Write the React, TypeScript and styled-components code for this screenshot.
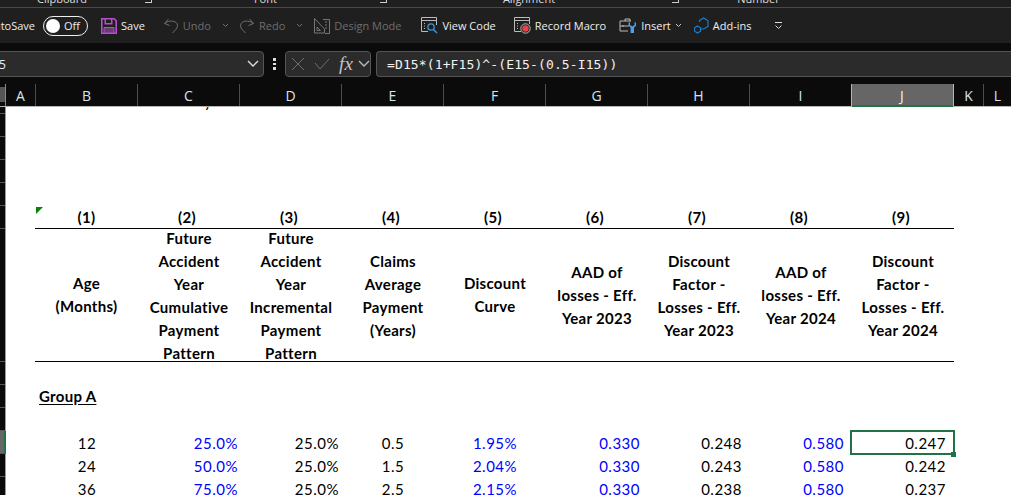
import React from "react";
import styled, { createGlobalStyle } from "styled-components";

const Global = createGlobalStyle`
  html, body { margin: 0; padding: 0; width: 1011px; height: 495px; overflow: hidden; background: #fff; }
  #root { width: 1011px; height: 495px; overflow: hidden; }
  * { box-sizing: border-box; }
`;

const uiFont = `"Open Sans", "Noto Sans", sans-serif`;
const COLS = "30px repeat(9, 102px) 30px 28px";

const Page = styled.div`
  display: flex; flex-direction: column; width: 1011px; height: 495px; overflow: hidden;
  font-family: ${uiFont};
`;

const GroupStrip = styled.div`
  height: 8px; flex: none; background: #1f1f1f; border-bottom: 1px solid #4a4a4a;
  display: flex; align-items: flex-end; overflow: hidden; color: #dcdcdc; font-size: 11px;
`;
const GroupLabel = styled.span<{ $left: number }>`
  margin-left: ${p => p.$left}px; line-height: 14px; margin-bottom: 1px; white-space: nowrap; flex: none;
`;
const Launcher = styled.i<{ $left: number }>`
  margin-left: ${p => p.$left}px; width: 7px; height: 3px; margin-bottom: 4px; flex: none;
  border-right: 1px solid #ccc; border-bottom: 1px solid #ccc;
`;

const Toolbar = styled.div`
  height: 35px; flex: none; background: #1f1f1f; display: flex; align-items: center;
  font-size: 11px; color: #eee; overflow: hidden;
`;
const AutoLabel = styled.span`
  margin-left: -15px; width: 50px; flex: none; text-align: right; white-space: nowrap; font-weight: 500;
`;
const Toggle = styled.div`
  margin-left: 8px; width: 45px; height: 20px; flex: none; border: 1.5px solid #eee; border-radius: 10px;
  display: flex; align-items: center; padding-left: 2px; gap: 4px; color: #eee;
`;
const Knob = styled.span`
  width: 14px; height: 14px; border-radius: 50%; background: #fff; flex: none;
`;
const Item = styled.div<{ $left: number; $off?: boolean }>`
  margin-left: ${p => p.$left}px; display: flex; align-items: center; gap: 4px; flex: none; white-space: nowrap;
  color: ${p => (p.$off ? "#6e6e6e" : "#eee")};
  svg { display: block; flex: none; }
`;

const FormulaRow = styled.div`
  height: 41px; flex: none; background: #0b0b0b; display: flex; align-items: flex-start; padding-top: 8px; overflow: hidden;
`;
const Box = styled.div`
  height: 26px; background: #2b2b2b; border: 1px solid #555; border-radius: 4px; display: flex; align-items: center; flex: none;
`;
const NameBox = styled(Box)`
  margin-left: -20px; width: 284px; padding: 0 3px 0 8px; justify-content: space-between;
  color: #eee; font-size: 12px;
`;
const Dots = styled.div`
  width: 21px; flex: none; height: 26px; display: flex; flex-direction: column; align-items: center; justify-content: center; gap: 2px;
  i { width: 2.4px; height: 2.4px; background: #ddd; display: block; }
`;
const FxBox = styled(Box)`
  width: 86px; padding-left: 5px; gap: 0;
  svg { display: block; flex: none; }
`;
const FxGlyph = styled.span`
  font-family: "Liberation Serif", serif; font-style: italic; font-weight: 400; font-size: 19px; line-height: 20px; color: #c4c4c4;
  margin-left: 9px; width: 18px; flex: none; letter-spacing: 0.3px;
`;
const Input = styled(Box)`
  margin-left: 5px; width: 660px; padding-left: 10px; border-radius: 4px 0 0 4px; border-right: none;
  font-family: "DejaVu Sans Mono", "Liberation Mono", monospace; font-size: 13px; letter-spacing: 0.12px; color: #f2f2f2; white-space: nowrap;
`;

const ColHeaderRow = styled.div`
  height: 23px; flex: none; display: flex; background: #0b0b0b; border-bottom: 1px solid #b5b5b5;
`;
const Corner = styled.div`
  width: 6px; flex: none; border-right: 1px solid #8a8a8a; background: linear-gradient(#0b0b0b 0 3px, #555 3px 18px, #0b0b0b 18px);
`;
const ColHeaders = styled.div`
  display: grid; grid-template-columns: ${COLS}; flex: none;
`;
const ColHead = styled.div<{ $active?: boolean; $last?: boolean }>`
  font-size: 14px; display: flex; align-items: center; justify-content: center; color: #d8e4f0;
  border-right: 1px solid ${p => (p.$active ? "#b5b5b5" : p.$last ? "transparent" : "#4d4d4d")};
  ${p => p.$active && `background:#666; color:#f2f2f2; box-shadow: inset 1px 0 #b5b5b5, inset 0 -2px #217346; margin-bottom:-1px; margin-left:-1px;`}
`;

const Sheet = styled.div`
  flex: 1; display: flex; min-height: 0; overflow: hidden;
`;
const Gutter = styled.div`
  width: 6px; flex: none; display: flex; flex-direction: column; background: #0b0b0b; border-right: 1px solid #9a9a9a;
`;
const GutterRow = styled.div<{ $h: number; $active?: boolean }>`
  height: ${p => p.$h}px; flex: none; border-bottom: 1px solid #555;
  ${p => p.$active && `background:#666; border-right:2px solid #217346; margin-right:-1px;`}
`;
const Grid = styled.div`
  flex: none; display: flex; flex-direction: column; background: #fff; color: #000;
  font-family: Lato, "Liberation Sans", sans-serif; font-size: 15px; letter-spacing: 0.3px;
`;
const Row = styled.div<{ $h: number }>`
  display: grid; grid-template-columns: ${COLS}; height: ${p => p.$h}px; flex: none;
`;
const Cell = styled.div<{ $align?: string; $blue?: boolean; $pad?: number }>`
  position: relative; display: flex; align-items: flex-end; padding: 0 ${p => p.$pad ?? 0}px 0 0;
  justify-content: ${p => p.$align ?? "center"};
  color: ${p => (p.$blue ? "#0000ff" : "#000")};
  white-space: nowrap; line-height: 21px; letter-spacing: 0.5px;
`;
const HeadCell = styled.div`
  position: relative; display: flex; align-items: flex-end; justify-content: center; padding-right: 4px;
  font-weight: 700; line-height: 21px; border-bottom: 1px solid #000;
  &:nth-child(2) { margin-left: -1px; padding-right: 0; }
`;
const WrapCell = styled.div<{ $top: number }>`
  display: flex; align-items: center; justify-content: center; text-align: center; padding-top: ${p => p.$top}px;
  font-weight: 700; line-height: 23px; border-bottom: 1px solid #000; white-space: pre-line; overflow: hidden;
  &:nth-child(2) { margin-left: -1px; }
`;
const Tail = styled.div`
  display: flex; justify-content: flex-start; align-items: flex-end; padding: 0 0 3px 66px; overflow: hidden; line-height: 20px;
`;
const Marker = styled.span`
  position: absolute; left: 1px; top: 1px; width: 0; height: 0;
  border-top: 7px solid #0a800a; border-right: 7px solid transparent;
`;
const GroupCell = styled.div`
  display: flex; align-items: flex-end; padding: 0 0 1px 3px; line-height: 21px; white-space: nowrap;
`;
const GroupTitle = styled.span`
  font-weight: 700; text-decoration: underline; text-underline-offset: 2px;
`;
const Selection = styled.span`
  position: absolute; inset: -1px -1px -1px -2px; border: 2px solid #217346; pointer-events: none;
  &::after {
    content: ""; position: absolute; right: -3px; bottom: -4px; width: 5px; height: 5px;
    background: #217346;
  }
`;

const Chevron = ({ c = "#ccc", w = 7 }: { c?: string; w?: number }) => (
  <svg width={w} height={(w * 5) / 7} viewBox="0 0 7 5"><path d="M1 1l2.500 2.500L6 1" fill="none" stroke={c} strokeWidth={w > 8 ? 0.7 : 1} /></svg>
);
const SaveIcon = () => (
  <svg width="16" height="16" viewBox="0 0 16 16">
    <path d="M.8.8h12.400l2 2v12.400H.8z" fill="#1f1f1f" stroke="#b54fca" strokeWidth="1.600" />
    <path d="M3.500 1h8v5.500h-8z" fill="#b54fca" />
    <path d="M5 1.500h5v3.500H5z" fill="#1f1f1f" />
    <path d="M3 9.500h10V15H3z" fill="#6a3c75" stroke="#b54fca" />
  </svg>
);
const UndoIcon = ({ flip }: { flip?: boolean }) => (
  <svg width="16" height="16" viewBox="0 0 16 16" style={flip ? { transform: "scaleX(-1)" } : undefined}>
    <path d="M5.500 1L1.500 5.500l5 2M1.500 5.500C6 2 14 2 14.500 7.500c.2 3-3 5-5 7.500" fill="none" stroke="#707070" strokeWidth="1" />
  </svg>
);
const DesignIcon = () => (
  <svg width="16" height="16" viewBox="0 0 16 16" fill="none" stroke="#767676">
    <path d="M.5.5l10 10.500v4H.5zM3 9l3.500 3.500H3z" />
    <path d="M9 1.500h6.500v14H11M11 4h2M11 7h2M11 10h2" />
  </svg>
);
const CodeIcon = () => (
  <svg width="17" height="17" viewBox="0 0 17 17" fill="none">
    <path d="M7 14.500H.5V.5h15V8M.5 3.500h15" stroke="#bbb" />
    <path d="M3 6.500h1M3 9h1M3 11.500h1" stroke="#bbb" />
    <circle cx="10" cy="10" r="3.200" stroke="#3a96dd" strokeWidth="1.300" />
    <path d="M12.500 12.500l3.500 3.500" stroke="#3a96dd" strokeWidth="1.500" />
  </svg>
);
const RecordIcon = () => (
  <svg width="17" height="17" viewBox="0 0 17 17" fill="none">
    <path d="M7 14.500H.5V.5h15V7M.5 3.500h15" stroke="#bbb" />
    <path d="M3 6.500h1M3 9h1M3 11.500h1" stroke="#bbb" />
    <circle cx="11.500" cy="11.500" r="4.700" stroke="#bbb" />
    <circle cx="11.500" cy="11.500" r="3.200" fill="#e8404a" />
  </svg>
);
const InsertIcon = () => (
  <svg width="18" height="16" viewBox="0 0 18 16" fill="none">
    <path d="M6 3V1h5v2M9 13H1V3h11M1 8h9M4 7v2" stroke="#bbb" />
    <path d="M11 4v3l2.300 1.500L15.600 7V4l1.400.800v3l-2 1.700V15h-3.400V9.500l-2-1.700v-3z" fill="#4aa3e8" />
  </svg>
);
const AddInsIcon = () => (
  <svg width="15" height="17" viewBox="0 0 15 17" fill="none" stroke="#1f7fd0" strokeWidth="1.100">
    <path d="M5.500 5V3.500L9.500 1l4.500 2.500v6L9.500 12H7" />
    <path d="M3.500 9L6.500 10.700v3.600L3.500 16 .6 14.300v-3.600z" />
  </svg>
);
const CustomizeIcon = () => (
  <svg width="9" height="9" viewBox="0 0 9 9" fill="none" stroke="#ddd">
    <path d="M1 1.500h7M1.500 4.500L4.500 7.500l3-3" />
  </svg>
);

const heads = ["A","B","C","D","E","F","G","H","I","J","K","L"];
const nums = ["(1)","(2)","(3)","(4)","(5)","(6)","(7)","(8)","(9)"];
const titles = [
  "Age\n(Months)",
  "Future\nAccident\nYear\nCumulative\nPayment\nPattern",
  "Future\nAccident\nYear\nIncremental\nPayment\nPattern",
  "Claims\nAverage\nPayment\n(Years)",
  "Discount\nCurve",
  "AAD of\nlosses - Eff.\nYear 2023",
  "Discount\nFactor -\nLosses - Eff.\nYear 2023",
  "AAD of\nlosses - Eff.\nYear 2024",
  "Discount\nFactor -\nLosses - Eff.\nYear 2024",
];
const data = [
  ["12","25.0%","25.0%","0.5","1.95%","0.330","0.248","0.580","0.247"],
  ["24","50.0%","25.0%","1.5","2.04%","0.330","0.243","0.580","0.242"],
  ["36","75.0%","25.0%","2.5","2.15%","0.330","0.238","0.580","0.237"],
];
const blue = [false,true,false,false,true,true,false,true,false];
const aligns = ["center","flex-end","flex-end","center","center","flex-end","flex-end","flex-end","flex-end"];
const pads = [0,2,3,0,0,8,8,8,8];
const gutter = [7,23,23,23,23,23,133,23,23,23,23,23,23];
const Empty = () => <div />;
const EmptyRow = ({ h }: { h: number }) => <Row $h={h} />;

export default function App() {
  return (
    <Page>
      <Global />
      <GroupStrip>
        <GroupLabel $left={37}>Clipboard</GroupLabel>
        <Launcher $left={58} />
        <GroupLabel $left={102}>Font</GroupLabel>
        <Launcher $left={103} />
        <GroupLabel $left={116}>Alignment</GroupLabel>
        <Launcher $left={117} />
        <GroupLabel $left={58}>Number</GroupLabel>
      </GroupStrip>
      <Toolbar>
        <AutoLabel>AutoSave</AutoLabel>
        <Toggle><Knob /><span>Off</span></Toggle>
        <Item $left={13}><SaveIcon /><span>Save</span></Item>
        <Item $left={18} $off><UndoIcon /><span>Undo</span></Item>
        <Item $left={11}><Chevron c="#707070" /></Item>
        <Item $left={10} $off><UndoIcon flip /><span>Redo</span></Item>
        <Item $left={11}><Chevron c="#707070" /></Item>
        <Item $left={11} $off><DesignIcon /><span>Design Mode</span></Item>
        <Item $left={20}><CodeIcon /><span>View Code</span></Item>
        <Item $left={18}><RecordIcon /><span>Record Macro</span></Item>
        <Item $left={13}><InsertIcon /><span>Insert</span><Chevron /></Item>
        <Item $left={12}><AddInsIcon /><span>Add-ins</span></Item>
        <Item $left={22}><CustomizeIcon /></Item>
      </Toolbar>
      <FormulaRow>
        <NameBox><span>J15</span><Chevron c="#ddd" w={14} /></NameBox>
        <Dots><i /><i /><i /></Dots>
        <FxBox>
          <svg width="14" height="14" viewBox="0 0 14 14"><path d="M1 1l12 12M13 1L1 13" stroke="#6e6e6e" fill="none" /></svg>
          <svg width="16" height="12" viewBox="0 0 16 12" style={{ marginLeft: 9 }}><path d="M1 5l5 6L15 1" stroke="#6e6e6e" fill="none" /></svg>
          <FxGlyph>fx</FxGlyph>
          <Chevron c="#bbb" w={14} />
        </FxBox>
        <Input>=D15*(1+F15)^-(E15-(0.5-I15))</Input>
      </FormulaRow>
      <ColHeaderRow>
        <Corner />
        <ColHeaders>
          {heads.map(h => <ColHead key={h} $active={h === "J"} $last={h === "L"}>{h}</ColHead>)}
        </ColHeaders>
      </ColHeaderRow>
      <Sheet>
        <Gutter>
          {gutter.map((h, i) => <GutterRow key={i} $h={h} $active={i === 10} />)}
        </Gutter>
        <Grid>
          <Row $h={7}>
            <Empty /><Empty /><Tail>y</Tail>
          </Row>
          <EmptyRow h={23} /><EmptyRow h={23} /><EmptyRow h={23} /><EmptyRow h={23} />
          <Row $h={23}>
            <Empty />
            {nums.map((n, i) => (
              <HeadCell key={n}>{i === 0 && <Marker />}{n}</HeadCell>
            ))}
          </Row>
          <Row $h={133}>
            <Empty />
            {titles.map((t, i) => (
              <WrapCell key={i} $top={t.split("\n").length % 2 === 0 && t.split("\n").length > 2 ? 2 : 0}>{t}</WrapCell>
            ))}
          </Row>
          <EmptyRow h={23} />
          <Row $h={23}>
            <Empty />
            <GroupCell><GroupTitle>Group A</GroupTitle></GroupCell>
          </Row>
          <EmptyRow h={23} />
          {data.map((r, ri) => (
            <Row $h={23} key={ri}>
              <Empty />
              {r.map((v, i) => (
                <Cell key={i} $align={aligns[i]} $blue={blue[i]} $pad={pads[i]}>
                  {v}
                  {ri === 0 && i === 8 && <Selection />}
                </Cell>
              ))}
            </Row>
          ))}
        </Grid>
      </Sheet>
    </Page>
  );
}
